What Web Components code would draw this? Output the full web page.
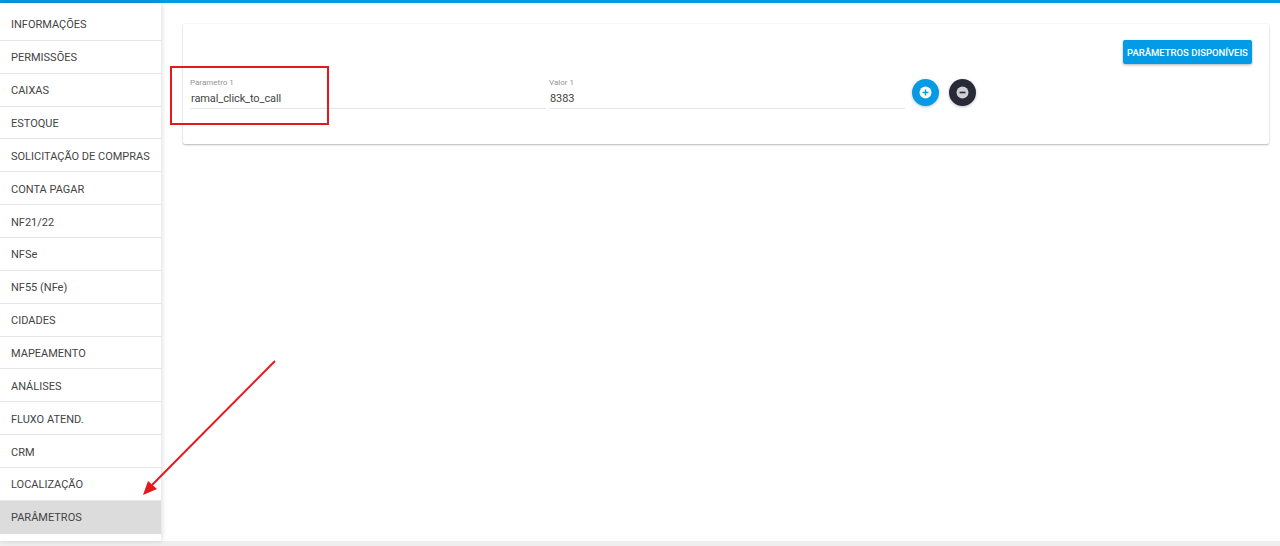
<!DOCTYPE html>
<html lang="pt-BR">
<head>
<meta charset="utf-8">
<title>Parâmetros</title>
<style>
	html, body { margin: 0; height: 100%; background: #fff; overflow: hidden; }
	body { font-family: Roboto, "Liberation Sans", sans-serif; }
</style>
</head>
<body>
<app-shell>
	<side-menu slot="menu">
		<menu-item>INFORMAÇÕES</menu-item>
		<menu-item>PERMISSÕES</menu-item>
		<menu-item>CAIXAS</menu-item>
		<menu-item>ESTOQUE</menu-item>
		<menu-item>SOLICITAÇÃO DE COMPRAS</menu-item>
		<menu-item>CONTA PAGAR</menu-item>
		<menu-item>NF21/22</menu-item>
		<menu-item>NFSe</menu-item>
		<menu-item>NF55 (NFe)</menu-item>
		<menu-item>CIDADES</menu-item>
		<menu-item>MAPEAMENTO</menu-item>
		<menu-item>ANÁLISES</menu-item>
		<menu-item>FLUXO ATEND.</menu-item>
		<menu-item>CRM</menu-item>
		<menu-item>LOCALIZAÇÃO</menu-item>
		<menu-item active>PARÂMETROS</menu-item>
	</side-menu>
	<param-card>
		<raised-button slot="action">PARÂMETROS DISPONÍVEIS</raised-button>
		<param-field label="Parametro 1" value="ramal_click_to_call"></param-field>
		<param-field label="Valor 1" value="8383"></param-field>
		<round-button slot="buttons" kind="add"></round-button>
		<round-button slot="buttons" kind="remove"></round-button>
	</param-card>
</app-shell>
<note-marks></note-marks>

<script>
class AppShell extends HTMLElement {
	constructor() {
		super();
		this.attachShadow({ mode: 'open' });
		this.shadowRoot.innerHTML = `
		<style>
			:host {
				display: flex;
				flex-direction: column;
				height: 546px;
				box-sizing: border-box;
				border-top: 3px solid #039be5;
			}
			.body {
				flex: 1;
				display: flex;
				min-height: 0;
			}
			.content {
				flex: 1;
				padding: 21px 11px 0 22px;
				min-width: 0;
			}
			.footer {
				height: 5px;
				background: #eeeeee;
			}
		</style>
		<div class="body">
			<slot name="menu"></slot>
			<div class="content"><slot></slot></div>
		</div>
		<div class="footer"></div>
		`
	}
}
customElements.define('app-shell', AppShell);

class SideMenu extends HTMLElement {
	constructor() {
		super();
		this.attachShadow({ mode: 'open' });
		this.shadowRoot.innerHTML = `
		<style>
			:host {
				display: block;
				width: 161px;
				flex: none;
				box-sizing: border-box;
				padding-top: 5px;
				background: #fff;
				box-shadow: 1px 0 5px rgba(0,0,0,0.14);
				position: relative;
				z-index: 1;
			}
		</style>
		<slot></slot>
		`
	}
}
customElements.define('side-menu', SideMenu);

class MenuItem extends HTMLElement {
	constructor() {
		super();
		this.attachShadow({ mode: 'open' });
		this.shadowRoot.innerHTML = `
		<style>
			:host {
				display: flex;
				align-items: center;
				box-sizing: border-box;
				height: 32.87px;
				padding: 2px 0 0 11px;
				font-size: 11px;
				color: #444444;
				white-space: nowrap;
				border-bottom: 1px solid #e6e6e6;
			}
			:host([active]) {
				background: #dcdcdc;
				border-bottom-color: #dcdcdc;
			}
		</style>
		<slot></slot>
		`
	}
}
customElements.define('menu-item', MenuItem);

class ParamCard extends HTMLElement {
	constructor() {
		super();
		this.attachShadow({ mode: 'open' });
		this.shadowRoot.innerHTML = `
		<style>
			:host {
				display: block;
				height: 120px;
				box-sizing: border-box;
				padding: 16px 17px 0 7px;
				background: #fff;
				border-radius: 2px;
				box-shadow: 0 1px 2px rgba(0,0,0,0.28), 0 0 2px rgba(0,0,0,0.07);
			}
			.top {
				display: flex;
				justify-content: flex-end;
				height: 24px;
			}
			.row {
				display: flex;
				align-items: flex-start;
				margin-top: 12px;
			}
			.buttons {
				display: flex;
				gap: 10px;
				margin: 3px 0 0 4px;
			}
		</style>
		<div class="top"><slot name="action"></slot></div>
		<div class="row">
			<slot></slot>
			<div class="buttons"><slot name="buttons"></slot></div>
		</div>
		`
	}
}
customElements.define('param-card', ParamCard);

class ParamField extends HTMLElement {
	constructor() {
		super();
		this.attachShadow({ mode: 'open' });
		this.shadowRoot.innerHTML = `
		<style>
			:host {
				display: block;
				width: 356px;
				margin-right: 3px;
				box-sizing: border-box;
				height: 33px;
				border-bottom: 1px solid #e6e6e6;
			}
			.label {
				font-size: 8px;
				line-height: 10px;
				padding-top: 2px;
				color: #949494;
			}
			.value {
				font-size: 11px;
				line-height: 14px;
				margin-top: 4px;
				padding-left: 1px;
				letter-spacing: -0.1px;
				color: #444444;
			}
		</style>
		<div class="label"></div>
		<div class="value"></div>
		`
	}
	connectedCallback() {
		this.shadowRoot.querySelector(".label").textContent = this.getAttribute("label");
		this.shadowRoot.querySelector(".value").textContent = this.getAttribute("value");
	}
}
customElements.define('param-field', ParamField);

class RaisedButton extends HTMLElement {
	constructor() {
		super();
		this.attachShadow({ mode: 'open' });
		this.shadowRoot.innerHTML = `
		<style>
			:host {
				display: flex;
				align-items: center;
				justify-content: center;
				width: 129px;
				height: 24px;
				background: #039be5;
				color: #fff;
				font-size: 9.5px;
				font-weight: 500;
				white-space: nowrap;
				border-radius: 2px;
				box-shadow: 0 1px 3px rgba(0,0,0,0.3);
			}
		</style>
		<slot></slot>
		`
	}
}
customElements.define('raised-button', RaisedButton);

class RoundButton extends HTMLElement {
	constructor() {
		super();
		this.attachShadow({ mode: 'open' });
		const add = this.getAttribute("kind") === "add";
		this.shadowRoot.innerHTML = `
		<style>
			:host {
				display: flex;
				align-items: center;
				justify-content: center;
				width: 27px;
				height: 27px;
				border-radius: 50%;
				background: ${add ? '#039be5' : '#282b37'};
				box-shadow: 0 1px 3px rgba(0,0,0,0.25);
			}
			svg { display: block; }
		</style>
		<svg width="13" height="13" viewBox="0 0 24 24">
			<circle cx="12" cy="12" r="11" fill="${add ? '#fff' : '#cfd0d3'}"/>
			${add
				? '<path d="M12 6.5v11M6.5 12h11" stroke="#039be5" stroke-width="2.6" fill="none"/>'
				: '<path d="M6.5 12h11" stroke="#282b37" stroke-width="3" fill="none"/>'}
		</svg>
		`
	}
}
customElements.define('round-button', RoundButton);

// anotacoes em vermelho por cima do print
class NoteMarks extends HTMLElement {
	constructor() {
		super();
		this.attachShadow({ mode: 'open' });
		this.shadowRoot.innerHTML = `
		<style>
			:host {
				position: absolute;
				left: 0;
				top: 0;
				width: 1280px;
				height: 546px;
				pointer-events: none;
				z-index: 5;
			}
			svg { display: block; }
		</style>
		<svg width="1280" height="546" viewBox="0 0 1280 546">
			<rect x="171" y="67" width="157" height="57" fill="none" stroke="#e6181e" stroke-width="2"/>
			<path d="M275 361L152 485" stroke="#e6181e" stroke-width="2" fill="none"/>
			<path d="M143 495L148 481L157 489Z" fill="#e6181e"/>
		</svg>
		`
	}
}
customElements.define('note-marks', NoteMarks);
</script>
</body>
</html>
